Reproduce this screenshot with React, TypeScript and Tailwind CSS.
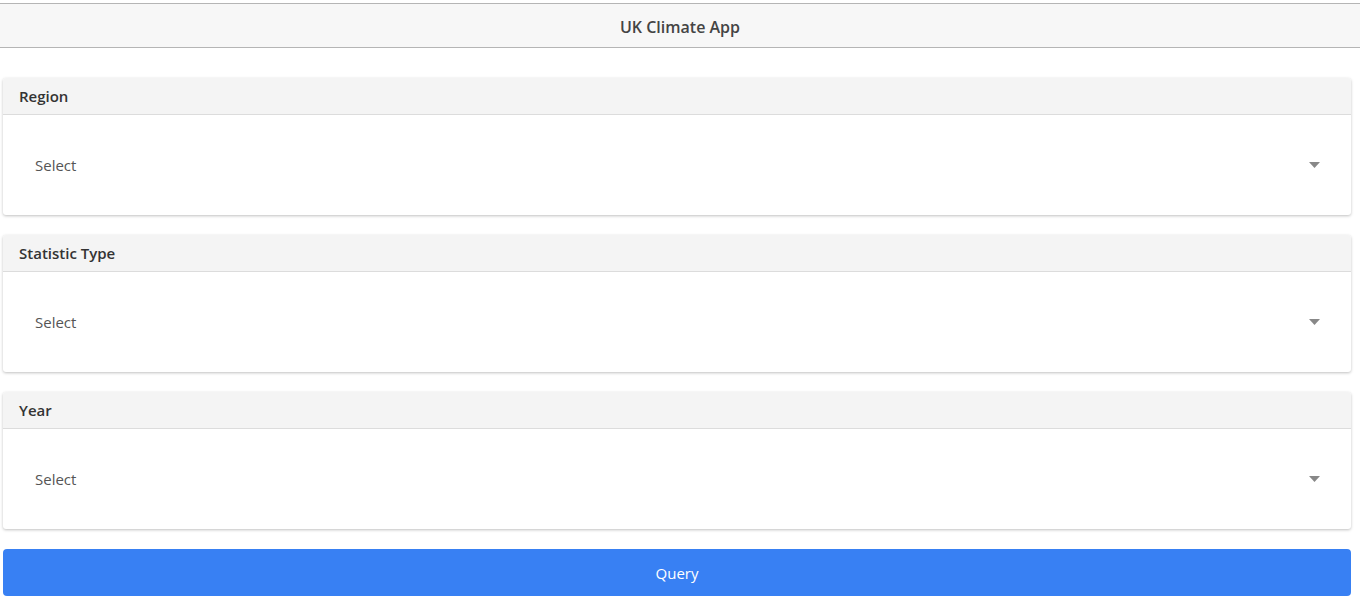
import React from "react";

function Card({ title }: { title: string }) {
  return (
    <div className="rounded-[3px] bg-white shadow-[0_1px_3px_rgba(0,0,0,0.25)] overflow-hidden">
      <div className="h-[37px] bg-[#f4f4f4] border-b border-[#dcdcdc] flex items-center pl-[16px] pt-[1px] text-[15px] font-semibold text-[#333]">
        {title}
      </div>
      <div className="h-[100px] flex items-center justify-between pl-[32px] pr-[31px]">
        <span className="text-[15px] text-[#555] pt-[1px]">Select</span>
        <svg width="11" height="6" viewBox="0 0 11 6">
          <path d="M0 0 L11 0 L5.5 6 Z" fill="#888" />
        </svg>
      </div>
    </div>
  );
}

export default function App() {
  return (
    <div className="w-[1360px] h-[603px] bg-white overflow-hidden" style={{ fontFamily: '"Open Sans", "Noto Sans", sans-serif' }}>
      <div className="mt-[3px] h-[45px] bg-[#f7f7f7] border-t border-b border-[#b5b5b5] flex items-center justify-center pt-[2px] text-[16px] font-semibold text-[#444]">
        UK Climate App
      </div>
      <div className="ml-[3px] w-[1348px] mt-[30px] flex flex-col gap-[20px]">
        <Card title="Region" />
        <Card title="Statistic Type" />
        <Card title="Year" />
        <button className="h-[47px] rounded-[4px] bg-[#3880f3] text-white text-[15px] flex items-center justify-center pt-[2px]">
          Query
        </button>
      </div>
    </div>
  );
}
